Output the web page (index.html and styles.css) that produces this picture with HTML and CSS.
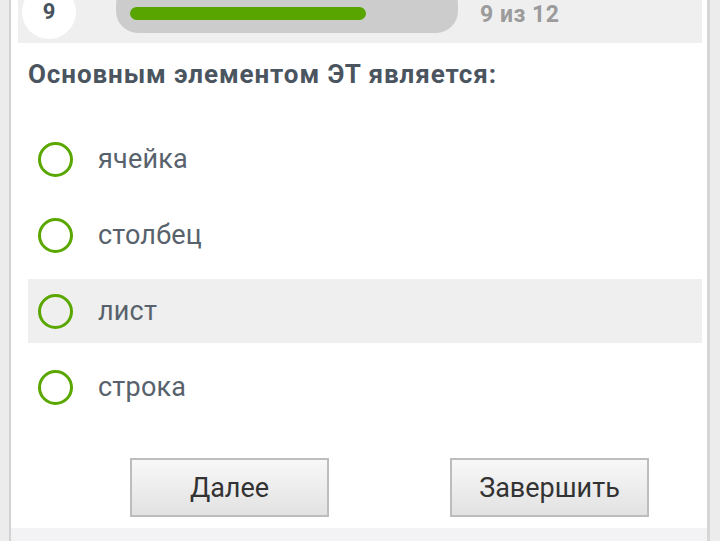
FILE: index.html
```html
<!DOCTYPE html>
<html lang="ru">
<head>
<meta charset="utf-8">
<title>Тест</title>
<link rel="stylesheet" href="styles.css">
</head>
<body>
<div class="card">
  <div class="topbar">
    <div class="num">9</div>
    <div class="track"><div class="fill"></div></div>
    <div class="count">9 из 12</div>
  </div>
  <h1 class="question">Основным элементом ЭТ является:</h1>
  <ul class="answers">
    <li class="answer"><span class="radio"></span><span class="label">ячейка</span></li>
    <li class="answer"><span class="radio"></span><span class="label">столбец</span></li>
    <li class="answer answer-hover"><span class="radio"></span><span class="label">лист</span></li>
    <li class="answer"><span class="radio"></span><span class="label">строка</span></li>
  </ul>
  <div class="actions">
    <button class="btn" type="button">Далее</button>
    <button class="btn" type="button">Завершить</button>
  </div>
  <div class="footer"></div>
</div>
</body>
</html>
```
FILE: styles.css
```css
html, body {
  margin: 0;
  padding: 0;
  height: 541px;
  overflow: hidden;
}

body {
  background: #ececec;
  font-family: Roboto, "Noto Sans", Arial, sans-serif;
}

.card {
  margin-left: 9px;
  width: 696px;
  height: 541px;
  background: #ffffff;
  border-left: 2px solid #d2d2d2;
  border-right: 3px solid #d6d6d6;
  display: flex;
  flex-direction: column;
}

/* progress strip */
.topbar {
  margin: 0 5px 0 7px;
  height: 43px;
  background: #efefef;
  display: flex;
  align-items: flex-start;
  overflow: hidden;
}

.num {
  margin: -15px 0 0 4px;
  width: 54px;
  height: 54px;
  border-radius: 50%;
  background: #ffffff;
  color: #47525c;
  font-weight: 700;
  font-size: 22px;
  line-height: 1;
  display: flex;
  align-items: center;
  justify-content: center;
}

.track {
  margin: -17px 0 0 40px;
  width: 342px;
  height: 50px;
  border-radius: 22px;
  background: #cccccc;
  padding: 24px 0 0 14px;
  box-sizing: border-box;
}

.fill {
  width: 236px;
  height: 13px;
  border-radius: 7px;
  background: #59a500;
}

.count {
  margin: 1px 0 0 22px;
  font-size: 23px;
  letter-spacing: 0.5px;
  font-weight: 700;
  color: #9b9b9b;
  line-height: 27px;
}

.question {
  margin: 16px 0 0 17px;
  font-size: 26px;
  letter-spacing: 0.9px;
  line-height: 30px;
  font-weight: 700;
  color: #4a555f;
}

.answers {
  list-style: none;
  margin: 38px 5px 0 17px;
  padding: 0;
  display: flex;
  flex-direction: column;
  gap: 12px;
}

.answer {
  height: 64px;
  display: flex;
  align-items: center;
  padding-left: 10px;
}

.answer-hover {
  background: #efefef;
}

.radio {
  width: 35px;
  height: 35px;
  box-sizing: border-box;
  border: 3px solid #5aa700;
  border-radius: 50%;
  flex: none;
}

.label {
  margin-left: 25px;
  font-size: 27px;
  letter-spacing: 0.2px;
  color: #58626c;
}

.actions {
  margin-top: 39px;
  padding-left: 119px;
  display: flex;
  gap: 121px;
}

.btn {
  width: 199px;
  height: 59px;
  border: 2px solid #bdbdbd;
  background: linear-gradient(#f8f8f8, #e2e2e2);
  font-family: Roboto, "Noto Sans", Arial, sans-serif;
  font-size: 27px;
  color: #333333;
  padding: 0;
  border-radius: 0;
}

.footer {
  margin-top: auto;
  height: 13px;
  background: #f3f3f5;
}
```
